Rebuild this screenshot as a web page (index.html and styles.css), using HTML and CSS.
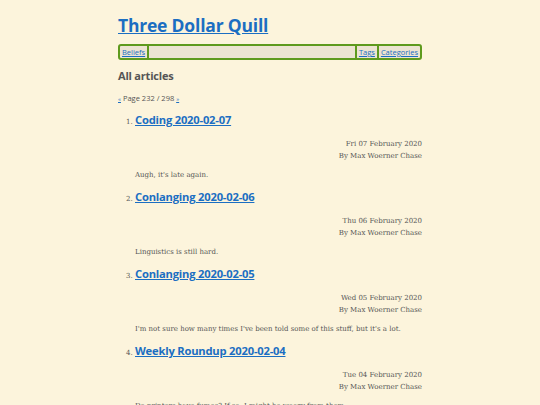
FILE: index.html
```html
<!DOCTYPE html>
<html>
<head>
<meta charset="utf-8">
<link rel="stylesheet" href="styles.css">
</head>
<body>
<div class="page">
  <header>
    <h1 class="site-title"><a href="#">Three Dollar Quill</a></h1>
    <nav class="nav">
      <a class="nav-item" href="#">Beliefs</a>
      <span class="nav-spacer"></span>
      <a class="nav-item nav-right" href="#">Tags</a>
      <a class="nav-item nav-right" href="#">Categories</a>
    </nav>
  </header>
  <main>
    <h2 class="section-title">All articles</h2>
    <p class="pager"><a href="#">«</a> Page 232 / 298 <a href="#">»</a></p>
    <ol class="articles" start="1">
      <li class="article">
        <h3 class="article-title"><a href="#">Coding 2020-02-07</a></h3>
        <div class="meta"><div>Fri 07 February 2020</div><div>By Max Woerner Chase</div></div>
        <p class="summary">Augh, it's late again.</p>
      </li>
      <li class="article">
        <h3 class="article-title"><a href="#">Conlanging 2020-02-06</a></h3>
        <div class="meta"><div>Thu 06 February 2020</div><div>By Max Woerner Chase</div></div>
        <p class="summary">Linguistics is still hard.</p>
      </li>
      <li class="article">
        <h3 class="article-title"><a href="#">Conlanging 2020-02-05</a></h3>
        <div class="meta"><div>Wed 05 February 2020</div><div>By Max Woerner Chase</div></div>
        <p class="summary">I'm not sure how many times I've been told some of this stuff, but it's a lot.</p>
      </li>
      <li class="article">
        <h3 class="article-title"><a href="#">Weekly Roundup 2020-02-04</a></h3>
        <div class="meta"><div>Tue 04 February 2020</div><div>By Max Woerner Chase</div></div>
        <p class="summary">Do printers have fumes? If so, I might be woozy from them.</p>
      </li>
    </ol>
  </main>
</div>
</body>
</html>
```
FILE: styles.css
```css
html, body {
  margin: 0;
  padding: 0;
  background: #fcf4dc;
}
body {
  font-family: "DejaVu Serif", serif;
  color: #555;
}
a {
  color: #1b6ec2;
}
.page {
  width: 304px;
  margin: 0 auto;
  padding-top: 14px;
}
.site-title {
  font-family: "Open Sans", sans-serif;
  font-size: 17.5px;
  font-weight: 700;
  margin: 0;
  line-height: 23px;
  letter-spacing: -0.2px;
}
.nav {
  display: flex;
  margin-top: 7px;
  border: 2px solid #5e9a1e;
  border-radius: 3px;
  background: #ece4d2;
  font-family: "Open Sans", sans-serif;
  font-size: 7.5px;
  line-height: 12px;
}
.nav-item {
  padding: 0 2px;
  border-right: 2px solid #5e9a1e;
}
.nav-spacer {
  flex: 1;
}
.nav-right {
  border-right: none;
  border-left: 2px solid #5e9a1e;
}
.section-title {
  font-family: "Open Sans", sans-serif;
  font-size: 11px;
  font-weight: 700;
  margin: 8px 0 0;
  line-height: 16px;
  letter-spacing: -0.2px;
  color: #555;
}
.pager {
  font-family: "Open Sans", sans-serif;
  font-size: 7.5px;
  margin: 8px 0 0;
  line-height: 12px;
}
.pager a {
  font-size: 6px;
}
.articles {
  margin: 7px 0 0;
  padding-left: 17px;
  font-size: 7px;
}
.article {
  margin: 0;
}
.article-title {
  font-family: "Open Sans", sans-serif;
  font-size: 11.2px;
  font-weight: 700;
  margin: 0;
  line-height: 16px;
  letter-spacing: -0.2px;
  display: inline;
}
.meta {
  text-align: right;
  margin-top: 10px;
  line-height: 12px;
  font-size: 7px;
}
.summary {
  margin: 7px 0 8px;
  font-size: 7px;
  line-height: 12px;
}
```
